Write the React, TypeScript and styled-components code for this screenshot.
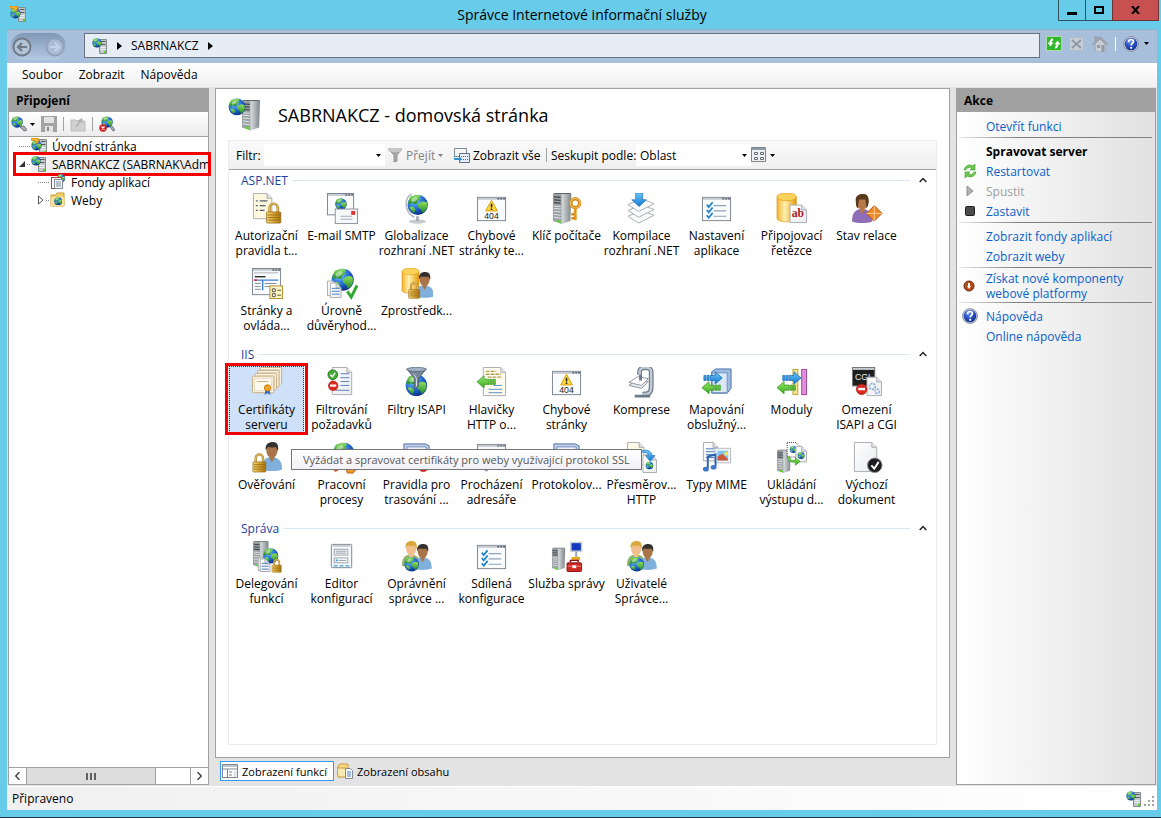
import React from "react";
import styled, { createGlobalStyle, css } from "styled-components";

const GlobalStyle = createGlobalStyle`
  * { box-sizing: border-box; }
  html, body { margin: 0; padding: 0; }
  body { font-family: "Open Sans", "Noto Sans", sans-serif; font-size: 12px; line-height: 15px; color: #000; }
  button, input, select { font: inherit; color: inherit; }
  button { background: none; border: 0; padding: 0; margin: 0; }
  svg { display: block; flex: none; }
  a { text-decoration: none; }
`;

/* ---------- drawing parts ---------- */

type At = { x?: number; y?: number; s?: number };
const at = (x = 0, y = 0, s = 1) => `translate(${x} ${y}) scale(${s})`;

const Defs = () => (
  <HiddenSvg width="0" height="0" aria-hidden="true">
    <defs>
      <radialGradient id="ocean" cx="35%" cy="28%" r="75%">
        <stop offset="0" stopColor="#b5e2ff" />
        <stop offset="0.35" stopColor="#3f8ce8" />
        <stop offset="0.75" stopColor="#1550b8" />
        <stop offset="1" stopColor="#0b2c7c" />
      </radialGradient>
      <linearGradient id="land" x1="0" y1="0" x2="0" y2="1">
        <stop offset="0" stopColor="#8fe05a" />
        <stop offset="1" stopColor="#1f8a2c" />
      </linearGradient>
      <linearGradient id="steel" x1="0" y1="0" x2="1" y2="0">
        <stop offset="0" stopColor="#d8dcde" />
        <stop offset="1" stopColor="#7d8488" />
      </linearGradient>
      <linearGradient id="gold" x1="0" y1="0" x2="1" y2="0">
        <stop offset="0" stopColor="#f6d878" />
        <stop offset="0.5" stopColor="#d9a536" />
        <stop offset="1" stopColor="#a87414" />
      </linearGradient>
      <linearGradient id="drum" x1="0" y1="0" x2="1" y2="0">
        <stop offset="0" stopColor="#f3b32a" />
        <stop offset="0.4" stopColor="#fff0b0" />
        <stop offset="1" stopColor="#e59a0c" />
      </linearGradient>
      <linearGradient id="paper" x1="0" y1="0" x2="1" y2="1">
        <stop offset="0" stopColor="#ffffff" />
        <stop offset="1" stopColor="#e9ebee" />
      </linearGradient>
      <linearGradient id="leaf" x1="0" y1="0" x2="0" y2="1">
        <stop offset="0" stopColor="#9cec6c" />
        <stop offset="1" stopColor="#35a81e" />
      </linearGradient>
      <linearGradient id="sky" x1="0" y1="0" x2="0" y2="1">
        <stop offset="0" stopColor="#6cc6f8" />
        <stop offset="1" stopColor="#1478d0" />
      </linearGradient>
      <radialGradient id="helpBall" cx="40%" cy="25%" r="80%">
        <stop offset="0" stopColor="#7d9df0" />
        <stop offset="0.5" stopColor="#2a52c4" />
        <stop offset="1" stopColor="#102f8c" />
      </radialGradient>
    </defs>
  </HiddenSvg>
);

const Globe = ({ x, y, s }: At) => (
  <g transform={at(x, y, s)}>
    <circle cx="16" cy="16" r="15" fill="url(#ocean)" />
    <path d="M9 3c4-2 9-2 12 0l-3 3 2 2-4 2-1 4-4 1-3-2-4 2-2-1c0-5 3-9 4-11z" fill="url(#land)" />
    <path d="M19 13l5-2 5 1c2 5 1 10-2 13l-4 3-2-5-4-3-1-4z" fill="url(#land)" />
    <path d="M4 19l5 0 4 4-2 5c-4-2-6-5-7-9z" fill="url(#land)" />
    <ellipse cx="11" cy="8" rx="5" ry="3" fill="#fff" opacity="0.45" transform="rotate(-30 11 8)" />
  </g>
);

const Server = ({ x, y, s }: At) => (
  <g transform={at(x, y, s)}>
    <path d="M9 1h10l-1 28-9 3z" fill="url(#steel)" />
    <path d="M0 1h9v31l-9-3z" fill="#9aa0a3" />
    <path d="M0 1h19l-1-1H2z" fill="#5e6467" />
    <path d="M1 4l7 .5M1 7l7 .5M1 10l7 .5" stroke="#3f4548" strokeWidth="1.3" />
    <path d="M1 13.500l7 .5M1 16l7 .5M1 19l7 .5M1 22l7 1M1 25l7 1" stroke="#e6eaec" strokeWidth="1" />
    <path d="M4 28l4 1v2l-4-1z" fill="#54e01c" />
  </g>
);

const SmallServer = ({ x, y, s }: At) => (
  <g transform={at(x, y, s)}>
    <path d="M.5.5h7v14h-7z" fill="#c3c8ca" stroke="#868c90" strokeWidth="1" />
    <path d="M2 2.500h4.500M2 5.500h4.500" stroke="#53585b" />
    <path d="M1.500 8.500h5M1.500 10.500h5" stroke="#eef1f2" />
    <path d="M5 12h2v2H5z" fill="#57d61e" />
  </g>
);

const Page = ({ x, y, s, w = 20, h = 26, fill = "url(#paper)" }: At & { w?: number; h?: number; fill?: string }) => (
  <g transform={at(x, y, s)}>
    <path d={`M.5.5h${w - 6}l5 5v${h - 6}h-${w - 1}z`} fill={fill} stroke="#a9adb3" />
    <path d={`M${w - 5.5}.5v5h5`} fill="#dfe2e6" stroke="#a9adb3" />
  </g>
);

const Lines = ({ x, y, w, n, gap = 3, c = "#4a7fc4" }: { x: number; y: number; w: number; n: number; gap?: number; c?: string }) => (
  <path d={Array.from({ length: n }, (_, i) => `M${x} ${y + i * gap}h${w}`).join("")} stroke={c} strokeWidth="1" />
);

const Frame = ({ x, y, w = 30, h = 25 }: { x: number; y: number; w?: number; h?: number }) => (
  <g transform={at(x, y)}>
    <rect x="0.5" y="0.5" width={w - 1} height={h - 1} fill="#fafbfc" stroke="#7c8490" />
    <path d={`M1 2h${w - 2}`} stroke="#c5cbd3" strokeWidth="2" />
    <path d={`M${w - 9} 2h2m1 0h2m1 0h2`} stroke="#5b6470" strokeWidth="1.5" />
  </g>
);

const Lock = ({ x, y, s }: At) => (
  <g transform={at(x, y, s)}>
    <path d="M4 11V6a4 4 0 0 1 8 0v5" fill="none" stroke="#b98a2c" strokeWidth="2.600" />
    <path d="M4 11V6a4 4 0 0 1 8 0v5" fill="none" stroke="#e9cd84" strokeWidth="0.9" />
    <rect x="1" y="10" width="14" height="11" rx="1" fill="url(#gold)" stroke="#8d6410" strokeWidth="0.7" />
    <path d="M2 13h12M2 15.500h12M2 18h12" stroke="#9a6c12" strokeWidth="0.9" />
  </g>
);

const Person = ({ x, y, s, hair = "#33302e", skin = "#a87448", shirt = "#7fb0dc" }: At & { hair?: string; skin?: string; shirt?: string }) => (
  <g transform={at(x, y, s)}>
    <path d="M1 27c0-8 3-11 7-12h5c5 1 8 4 8 12-5 2-15 2-20 0z" fill={shirt} />
    <path d="M8 15l3 5 3-5z" fill={skin} />
    <ellipse cx="11" cy="8.500" rx="5.500" ry="7" fill={skin} />
    <path d="M5 8C4 2 8 0 12 0s6 3 5 9l-2-4c-3 1-6 0-8 0z" fill={hair} />
  </g>
);

const Drum = ({ x, y, s }: At) => (
  <g transform={at(x, y, s)}>
    <path d="M0 4v22c0 5 20 5 20 0V4z" fill="url(#drum)" stroke="#d08c0a" strokeWidth="0.6" />
    <ellipse cx="10" cy="4" rx="10" ry="4" fill="#fbd35a" stroke="#e2a21c" strokeWidth="0.8" />
  </g>
);

const ArrowShape = ({ x, y, s, left, fill }: At & { left?: boolean; fill: string }) => (
  <g transform={at(x, y, s)}>
    <path
      d={left ? "M0 6L7 0v3.500h5v5H7V12zM13 3.500h2v5h-2zM16 3.500h2v5h-2z" : "M18 6L11 0v3.500H6v5h5V12zM5 3.500H3v5h2zM2 3.500H0v5h2z"}
      fill={fill}
      stroke={left ? "#2f9418" : "#1266b4"}
      strokeWidth="0.7"
    />
  </g>
);

const NoEntry = ({ x, y, s }: At) => (
  <g transform={at(x, y, s)}>
    <circle cx="6" cy="6" r="5.500" fill="#d9281e" stroke="#a31108" strokeWidth="0.6" />
    <rect x="2.500" y="4.500" width="7" height="2.500" fill="#fff" />
  </g>
);

const GlobeAndServer = () => (
  <>
    <SmallServer x={7} y={1} />
    <Globe x={0} y={0} s={0.31} />
  </>
);

const CheckList = () => (
  <>
    <Frame x={1} y={4} />
    <path d="M13 13h13M13 18.500h13M13 24h13" stroke="#8fa3bb" strokeWidth="1.200" />
    <path d="M6 12l2 2.500 4-5M6 17.500l2 2.500 4-5M6 23l2 2.500 4-5" fill="none" stroke="#1b83c4" strokeWidth="1.800" />
  </>
);

const Error404 = () => (
  <>
    <Frame x={1} y={4} />
    <path d="M16 7.500l6 11h-12z" fill="#ffd93a" stroke="#d99d0a" strokeLinejoin="round" />
    <path d="M16 11v4M16 16v1.500" stroke="#222" strokeWidth="1.600" />
    <text x="16" y="27" textAnchor="middle" fontSize="9" fontFamily="Liberation Sans, sans-serif" fill="#222">404</text>
  </>
);

const Community = () => (
  <>
    <Person x={0} y={0} s={0.95} hair="#d9a83c" skin="#f0c08c" shirt="#8fb368" />
    <Person x={12} y={3} s={0.94} />
    <Globe x={3} y={16} s={0.5} />
  </>
);

const Scroll = () => (
  <>
    <path d="M3 2h22l4 2v20H8L3 21z" fill="#c4d2ea" stroke="#4c67a3" />
    <path d="M6 5h20v18H6z" fill="#eff4fc" stroke="#6d87bb" />
    <Lines x={9} y={9} w={13} n={4} />
  </>
);

const art: Record<string, React.ReactNode> = {
  authRules: (
    <>
      <Page x={2} y={0} w={20} h={27} fill="#fdf8df" />
      <path d="M5 8h2m2 0h8M5 13h2m2 0h6M5 18h2m2 0h5" stroke="#56606c" strokeWidth="1.300" />
      <Lock x={15} y={9} s={1.05} />
    </>
  ),
  smtp: (
    <>
      <Frame x={1} y={0} w={28} h={23} />
      <Globe x={9} y={5} s={0.4} />
      <rect x="9.500" y="16.500" width="23" height="15" fill="#f6f7f9" stroke="#8d949e" />
      <rect x="26" y="18.500" width="4" height="4" fill="#e0322a" />
      <path d="M15 24h12M15 27h12" stroke="#a3aab3" />
    </>
  ),
  globalization: (
    <>
      <ellipse cx="17" cy="29.500" rx="9" ry="2.200" fill="#c6cbd0" />
      <path d="M17 24v5" stroke="#aab0b6" strokeWidth="3" />
      <path d="M11 1C3 5 3 20 14 25" fill="none" stroke="#b7bdc3" strokeWidth="1.800" />
      <Globe x={6} y={1} s={0.7} />
    </>
  ),
  error404: <Error404 />,
  machineKey: (
    <>
      <Server x={2} y={0} />
      <circle cx="25" cy="10.500" r="4.500" fill="none" stroke="#d48a1c" strokeWidth="3.500" />
      <circle cx="25" cy="10.500" r="5" fill="none" stroke="#fbcf6a" strokeWidth="1" />
      <path d="M25 15v13" stroke="#e09a24" strokeWidth="3" />
      <path d="M24 22h-3m3 4h-3" stroke="#d48a1c" strokeWidth="2.500" />
    </>
  ),
  compilation: (
    <>
      <path d="M2 24l14-6 13 5-16 8z" fill="#fafbfb" stroke="#a7adb4" />
      <path d="M2 18l14-6 13 5-16 8z" fill="#fafbfb" stroke="#a7adb4" />
      <path d="M2 12l14-6 13 5-16 8z" fill="#fff" stroke="#a7adb4" />
      <path d="M10 0h7v7h4l-7.500 7L6 7h4z" fill="url(#sky)" stroke="#1a6fb8" strokeWidth="0.7" />
    </>
  ),
  checklist: <CheckList />,
  connection: (
    <>
      <Drum x={1} y={0} />
      <Page x={14} y={12} w={18} h={19} />
      <text x="22.500" y="25" textAnchor="middle" fontSize="12" fontWeight="700" fontFamily="Liberation Serif, serif" fill="#b01818">ab</text>
    </>
  ),
  session: (
    <>
      <Person x={0} y={1} s={1.05} hair="#5a3a1c" skin="#b57848" shirt="#8f6cb8" />
      <path d="M5 9C4 3 8 1 12 1s7 3 6 9c0 3-1 4-2 6l-1-9C12 5 9 6 8 8l-1 8c-2-2-2-5-2-7z" fill="#5a3a1c" />
      <path d="M24 13l8 8-8 8-8-8z" fill="#f08a28" stroke="#c2530a" />
      <path d="M24 13v16M16 21h16" stroke="#fcd09a" />
    </>
  ),
  pages: (
    <>
      <Frame x={1} y={0} w={30} h={28} />
      <Lines x={3} y={5} w={25} n={1} c="#aab2bd" />
      <path d="M4 9h11" stroke="#333" strokeWidth="1.500" />
      <path d="M4 12.500h24M12 13v10" stroke="#3f7fd8" strokeWidth="1.500" />
      <path d="M3 12.500h3" stroke="#d82020" strokeWidth="1.500" />
      <Lines x={4} y={16} w={6} n={3} c="#828c98" />
      <Lines x={14} y={16} w={12} n={2} c="#828c98" />
      <rect x="19.500" y="18.500" width="13" height="13" fill="#fdf5c8" stroke="#b0902c" />
      <path d="M22 21.500h3v3h-3zM22 26.500h3v3h-3z" fill="#fff" stroke="#5a5238" />
      <path d="M27 23h4m-4 5h4" stroke="#5a5238" />
    </>
  ),
  trust: (
    <>
      <Globe x={5} y={0} s={0.76} />
      <Page x={1} y={13} w={12} h={16} />
      <Page x={4} y={15} w={12} h={16} />
      <Lines x={6} y={21} w={8} n={3} />
      <path d="M22 24l4 6 6-12" fill="none" stroke="#2fa82c" strokeWidth="3" />
    </>
  ),
  providers: (
    <>
      <Drum x={1} y={0} s={0.88} />
      <Person x={14} y={4} s={0.94} />
      <Lock x={7} y={14} s={0.82} />
    </>
  ),
  certificates: (
    <>
      {[9, 6, 3, 0].map((d) => (
        <g key={d} transform={at(1 + d * 0.9, 9 - d)}>
          <rect x="0.500" y="0.500" width="22" height="17" rx="1" fill="#fffaf0" stroke="#c5ab80" />
          <rect x="2.500" y="2.500" width="18" height="13" fill="none" stroke="#e3d3b4" />
        </g>
      ))}
      <path d="M6 15h12" stroke="#c5ab80" />
      <path d="M15 23l-1 6 3-2 3 2-1-6z" fill="#3a6fc2" />
      <circle cx="17" cy="21.500" r="3.200" fill="#f0a820" stroke="#c77c0a" />
    </>
  ),
  requestFilter: (
    <>
      <Page x={6} y={0} w={21} h={29} />
      <path d="M15 7h9M15 11h9M15 15h9M15 19h9M10 24h14" stroke="#5a7fb8" />
      <circle cx="7" cy="8" r="5" fill="#48a83a" stroke="#2b7d20" />
      <path d="M4.500 8l2 2 3-4" fill="none" stroke="#fff" strokeWidth="1.500" />
      <NoEntry x={2} y={14} s={0.9} />
    </>
  ),
  isapi: (
    <>
      <Globe x={4} y={7} s={0.74} />
      <path d="M6 2h20l-8 10v8l-4 3V12z" fill="#76899c" stroke="#48586a" strokeWidth="0.8" />
      <ellipse cx="16" cy="2.500" rx="10" ry="2.200" fill="#9fb1c2" stroke="#48586a" strokeWidth="0.7" />
      <path d="M13 7l3 5v8" stroke="#d5dfe8" fill="none" />
    </>
  ),
  headers: (
    <>
      <Page x={7} y={0} w={24} h={30} fill="#fdfaf0" />
      <path d="M10 4.500h11M10 7.500h16M12 10.500h14" stroke="#b6a24c" strokeWidth="1.400" strokeDasharray="4 1" />
      <path d="M18 19h9M13 23h14M13 26.500h14" stroke="#5a8fc4" />
      <ArrowShape x={1} y={9} s={1.05} left fill="url(#leaf)" />
    </>
  ),
  compression: (
    <>
      <path d="M14 8V5c0-6 12-6 12 0v15c0 8-4 8-9 8" fill="none" stroke="#6b7b8c" strokeWidth="5" />
      <path d="M14 8V5c0-6 12-6 12 0v15c0 8-4 8-9 8" fill="none" stroke="#c2ccd6" strokeWidth="2.500" />
      <path d="M3 19l9-6 11 2-7 7z" fill="#e9ecee" stroke="#8d959d" />
      <path d="M3 16l9-6 11 2-7 7z" fill="#fff" stroke="#8d959d" />
      <path d="M15 8v6M9 30h16" stroke="#6b7b8c" strokeWidth="3" />
    </>
  ),
  handlers: (
    <>
      <path d="M11 5l4-3h16v20l-4 5H11z" fill="#9ebbe0" stroke="#4d74aa" />
      <path d="M11.500 6H27v20.500H11.500z" fill="#dce8f6" stroke="#6d92c4" />
      <ArrowShape x={3} y={5} s={1.05} fill="url(#sky)" />
      <ArrowShape x={1} y={15} s={1.05} left fill="url(#leaf)" />
    </>
  ),
  modules: (
    <>
      <rect x="17.500" y="2.500" width="5" height="26" fill="#f6e58a" stroke="#b9a030" />
      <rect x="26.500" y="2.500" width="5" height="26" fill="#e28fdc" stroke="#a246a0" />
      <ArrowShape x={7} y={5} s={1.05} fill="url(#sky)" />
      <ArrowShape x={1} y={15} s={1.05} left fill="url(#leaf)" />
    </>
  ),
  cgi: (
    <>
      <rect x="1.500" y="0.500" width="23" height="19" fill="#1e1e1e" stroke="#777" />
      <path d="M2 2h22" stroke="#c8ccd0" strokeWidth="2" />
      <text x="4" y="13" fontSize="9" fontFamily="Liberation Sans, sans-serif" fill="#eee">CGI</text>
      <Page x={16} y={10} w={16} h={20} />
      <circle cx="22" cy="20" r="3" fill="none" stroke="#8fb0d4" strokeWidth="2" strokeDasharray="2 1" />
      <circle cx="27" cy="25" r="2.200" fill="none" stroke="#8fb0d4" strokeWidth="1.600" strokeDasharray="2 1" />
      <NoEntry x={5} y={17} />
    </>
  ),
  authentication: (
    <>
      <Person x={10} y={0} s={1.05} />
      <Lock x={1} y={11} s={0.95} />
    </>
  ),
  workers: (
    <>
      <Globe x={6} y={0} s={0.76} />
      <path d="M20 26l8-3 4 4-4 5h-6z" fill="#ef9a2a" stroke="#b9640a" />
      <path d="M4 26l6-2 4 4-4 3z" fill="#e0542a" />
    </>
  ),
  tracing: (
    <>
      <Scroll />
      <NoEntry x={17} y={19} />
    </>
  ),
  browsing: (
    <>
      <Frame x={1} y={2} />
      <circle cx="16" cy="19" r="6" fill="#dbe9f6" stroke="#8392a4" strokeWidth="2" />
      <path d="M13 25l-3 5" stroke="#8392a4" strokeWidth="3" />
    </>
  ),
  logging: <Scroll />,
  redirect: (
    <>
      <Page x={1} y={0} w={18} h={24} fill="#fdf9e6" />
      <Page x={17} y={13} w={15} h={19} />
      <Globe x={20} y={20} s={0.26} />
      <path d="M16 9c7-2 10 1 11 5h3l-5 6-5-6h3c-1-3-3-4-7-3z" fill="url(#sky)" stroke="#1a6fb8" strokeWidth="0.6" />
    </>
  ),
  mime: (
    <>
      <Page x={2} y={0} w={16} h={20} />
      <Lines x={5} y={7} w={9} n={4} />
      <rect x="14.500" y="6.500" width="16" height="15" fill="#f3f5f7" stroke="#b4bac2" />
      <rect x="17" y="9" width="11" height="10" fill="#7cc6f4" />
      <path d="M17 19v-4l5-3 6 6v1z" fill="#ce5a3c" />
      <circle cx="26" cy="12" r="2" fill="#fde54a" />
      <path d="M7 27V15l8-2v12" fill="none" stroke="#2d62b0" strokeWidth="2" />
      <ellipse cx="5" cy="28" rx="3" ry="2.400" fill="#3f78c8" />
      <ellipse cx="13" cy="26" rx="3" ry="2.400" fill="#3f78c8" />
    </>
  ),
  caching: (
    <>
      <Server x={1} y={8} s={0.75} />
      <path d="M11.500.5h9l4 4v11h-13z" fill="#fbfcfc" stroke="#444" strokeDasharray="1 1" />
      <Globe x={14} y={4} s={0.24} />
      <Page x={20} y={4} w={12} h={17} />
      <Globe x={22} y={10} s={0.24} />
      <path d="M14 15c0 4 3 4 6 4v-3l5 4-5 4v-3c-5 0-8-1-8-6z" fill="url(#leaf)" stroke="#2f9418" strokeWidth="0.6" />
    </>
  ),
  defaultDoc: (
    <>
      <Page x={3} y={0} w={24} h={31} />
      <circle cx="24.500" cy="24" r="7.500" fill="#1d1d1d" stroke="#8d8d8d" />
      <path d="M21 24l3 3.500 4.500-7" fill="none" stroke="#fff" strokeWidth="2" />
    </>
  ),
  delegation: (
    <>
      <Server x={2} y={0} s={0.85} />
      <Globe x={12} y={7} s={0.52} />
      <Page x={7} y={17} w={11} h={14} />
      <Page x={9} y={18} w={11} h={14} />
      <Lines x={11} y={23} w={7} n={3} />
      <Lock x={21} y={18} s={0.68} />
    </>
  ),
  editor: (
    <>
      <rect x="5.500" y="3.500" width="21" height="24" rx="1" fill="#f7f8fa" stroke="#7c8490" />
      <path d="M7 5h18" stroke="#c5cbd3" strokeWidth="2" />
      <rect x="8.500" y="8.500" width="14" height="6" fill="#fff" stroke="#9aa2ad" />
      <rect x="8.500" y="17.500" width="14" height="5" fill="#fff" stroke="#9aa2ad" />
      <path d="M10 10.500h11M10 12.500h11M13 20h8" stroke="#8d96a2" />
      <path d="M10 20h2" stroke="#2ba3d8" strokeWidth="2" />
      <path d="M8 25.500h4m2 0h4m2 0h4" stroke="#5ab4d8" strokeWidth="1.500" />
    </>
  ),
  community: <Community />,
  service: (
    <>
      <Server x={1} y={7} s={0.72} />
      <rect x="20.500" y="1.500" width="11" height="9" fill="#1638c0" stroke="#c6ccd2" strokeWidth="1.500" />
      <path d="M26 11v9" stroke="#9aa2aa" strokeWidth="2" />
      <path d="M21 18h9" stroke="#e8a820" strokeWidth="3" />
      <path d="M20 22v-2h8v2" fill="none" stroke="#8e1410" strokeWidth="1.500" />
      <rect x="16.500" y="22.500" width="15" height="9" rx="1" fill="#cf2a22" stroke="#8e1410" />
      <path d="M17 26h14" stroke="#f28a84" />
      <path d="M22 25h4v3h-4z" fill="#f3f3f3" />
    </>
  ),
};

const Art = ({ name }: { name: string }) => (
  <svg width="32" height="32" viewBox="0 0 33 33" aria-hidden="true">{art[name]}</svg>
);

const Svg16 = ({ children, size = 16 }: { children: React.ReactNode; size?: number }) => (
  <svg width={size} height={size} viewBox="0 0 16 16" aria-hidden="true">{children}</svg>
);

const ServerIcon = () => <Svg16><GlobeAndServer /></Svg16>;

const StartIcon = () => (
  <Svg16>
    <SmallServer x={8} y={1} />
    <Globe x={0} y={2} s={0.34} />
    <path d="M0 0h7l1 2-2 4-2-3-4-1z" fill="#f4b42c" stroke="#c27c0a" strokeWidth="0.7" />
  </Svg16>
);

const HelpIcon = () => (
  <Svg16>
    <circle cx="8" cy="8" r="7.500" fill="#c9ccd6" stroke="#85889a" strokeWidth="0.8" />
    <circle cx="8" cy="8" r="6.300" fill="url(#helpBall)" />
    <path d="M5.500 6.200c0-3.600 5-3.400 5-.6 0 1.800-2.300 1.900-2.300 3.800" fill="none" stroke="#fff" strokeWidth="1.700" />
    <circle cx="8.200" cy="11.800" r="1.100" fill="#fff" />
  </Svg16>
);

const Caret = ({ color = "#000" }: { color?: string }) => (
  <svg width="5" height="3" viewBox="0 0 5 3" aria-hidden="true"><path d="M0 0h5L2.500 3z" fill={color} /></svg>
);

const Triangle = () => (
  <svg width="5" height="8" viewBox="0 0 5 8" aria-hidden="true"><path d="M0 0l5 4-5 4z" fill="#000" /></svg>
);

/* ---------- layout ---------- */

const HiddenSvg = styled.svg`
  position: absolute;
`;

const Window = styled.div`
  display: flex;
  flex-direction: column;
  min-height: 100vh;
  padding: 0 4px 7px 7px;
  background: #67cbea;
  border-bottom: 1px solid #2b3a44;
`;

const TitleBar = styled.header`
  display: grid;
  grid-template-columns: 100px 1fr 100px;
  align-items: start;
  height: 29px;
`;

const TitleIcon = styled.span`
  padding: 6px 0 0 3px;
`;

const Title = styled.h1`
  margin: 0;
  font-size: 14px;
  font-weight: 400;
  line-height: 30px;
  text-align: center;
  white-space: nowrap;
`;

const Captions = styled.div`
  display: flex;
  justify-content: flex-end;
  margin-right: -2px;
`;

const CaptionButton = styled.button<{ $close?: boolean }>`
  display: flex;
  align-items: center;
  justify-content: center;
  width: ${(p) => (p.$close ? 47 : 28)}px;
  height: 21px;
  margin-left: -1px;
  border: 1px solid ${(p) => (p.$close ? "#6e3232" : "#33505c")};
  border-top: 0;
  background: ${(p) => (p.$close ? "#c75050" : "transparent")};
`;

const AddressBar = styled.div`
  display: flex;
  align-items: center;
  height: 34px;
  padding: 0 8px 0 4px;
  background: #a8bfdc;
  border-top: 1px solid #8db0cc;
`;

const NavPair = styled.div`
  display: flex;
  align-items: center;
  justify-content: space-between;
  width: 55px;
  height: 27px;
  padding: 0 1px;
  margin-right: 18px;
  border-radius: 13px;
  background: linear-gradient(#8098b6, #b4c9e2);
`;

const Crumbs = styled.nav`
  display: flex;
  align-items: center;
  flex: 1;
  gap: 9px;
  height: 25px;
  padding: 0 7px;
  margin: 0 6px 2px 0;
  border: 1px solid #6a737c;
  background: #e7edf5;
`;

const AddressTools = styled.div`
  display: flex;
  align-items: center;
  gap: 7px;
  margin-bottom: 6px;
`;

const ToolSeparator = styled.span<{ $color?: string }>`
  width: 1px;
  height: 14px;
  background: ${(p) => p.$color ?? "#a0a0a0"};
`;

const ToolButton = styled.button<{ $gap?: number }>`
  display: flex;
  align-items: center;
  gap: ${(p) => p.$gap ?? 3}px;
  white-space: nowrap;
  &:disabled { color: #838383; }
`;

const MenuBar = styled.nav`
  display: flex;
  align-items: center;
  gap: 16px;
  height: 24px;
  padding: 0 15px 2px;
  background: linear-gradient(#fff, #f0f0f0);
`;

const Body = styled.div`
  display: flex;
  flex: 1;
  gap: 6px;
  padding: 1px;
  background: #e3e3e3;
`;

const panel = css`
  display: flex;
  flex-direction: column;
  border: 1px solid #a0a0a0;
`;

const Connections = styled.section`
  ${panel}
  width: 201px;
  flex: none;
  background: #fff;
`;

const PanelTitle = styled.h2`
  margin: 0;
  padding: 0 7px;
  font-size: 12px;
  font-weight: 700;
  line-height: 23px;
  background: #a0a0a0;
`;

const ConnectionTools = styled.div`
  display: flex;
  align-items: center;
  gap: 6px;
  height: 25px;
  padding: 0 2px;
  border-bottom: 1px solid #a0a0a0;
  background: linear-gradient(#fff, #ececec);
`;

const Tree = styled.ul`
  flex: 1;
  margin: 0;
  padding: 0;
  list-style: none;
`;

const TreeRow = styled.li<{ $depth: number }>`
  position: relative;
  display: flex;
  align-items: center;
  height: 18px;
  padding-left: ${(p) => 10 + p.$depth * 19}px;
`;

const Branch = styled.span<{ $leaf?: boolean }>`
  display: flex;
  align-items: center;
  gap: 2px;
  width: 12px;
  height: 18px;
  &::after {
    content: "";
    flex: 1;
    height: 1px;
    margin-right: 1px;
    background: repeating-linear-gradient(to right, #909090 0 1px, transparent 1px 2px);
  }
`;

const TreeLink = styled.a<{ $active?: boolean }>`
  display: flex;
  align-items: center;
  flex: 1;
  gap: 5px;
  min-width: 0;
  height: 18px;
  overflow: hidden;
  color: #000;
  white-space: nowrap;
  background: ${(p) => (p.$active ? "#f0f0f0" : "transparent")};
`;

const Callout = styled.span<{ $inset: string }>`
  position: absolute;
  inset: ${(p) => p.$inset};
  border: 3px solid #f00000;
  pointer-events: none;
`;

const ScrollBar = styled.div`
  display: grid;
  grid-template-columns: 17px 130px 1fr 17px;
  height: 17px;
  border-top: 1px solid #a0a0a0;
`;

const ScrollPart = styled.button`
  display: flex;
  align-items: center;
  justify-content: center;
`;

const ScrollThumb = styled.div`
  display: flex;
  align-items: center;
  justify-content: center;
  gap: 2px;
  border: solid #a0a0a0;
  border-width: 0 1px;
  background: #dcdcdc;
  i { width: 2px; height: 7px; background: #606060; }
`;

const ScrollTrack = styled.div`
  border-right: 1px solid #a0a0a0;
`;

const Center = styled.main`
  display: flex;
  flex-direction: column;
  flex: 1;
  min-width: 0;
`;

const Sheet = styled.div`
  ${panel}
  flex: 1;
  padding: 0 12px 12px;
  background: #fff;
`;

const PageHead = styled.div`
  display: flex;
  align-items: center;
  gap: 17px;
  height: 51px;
  h2 { margin: 0; font-size: 18px; font-weight: 400; line-height: 24px; }
`;

const Features = styled.div`
  flex: 1;
  border: 1px solid #ececec;
`;

const FilterBar = styled.form`
  display: flex;
  align-items: center;
  height: 29px;
  padding-left: 7px;
  border-bottom: 1px solid #a0a0a0;
  background: linear-gradient(#fafafa, #efefef);
  white-space: nowrap;
`;

const Slot = styled.div<{ $w: number }>`
  display: flex;
  align-items: center;
  gap: 3px;
  width: ${(p) => p.$w}px;
`;

const Combo = styled.div<{ $w: number }>`
  display: grid;
  align-items: center;
  width: ${(p) => p.$w}px;
  height: 22px;
  background: #fff;
  > * { grid-area: 1 / 1; }
  > svg { justify-self: end; margin-right: 4px; pointer-events: none; }
  input, select {
    width: 100%;
    height: 22px;
    padding: 0 4px;
    border: 0;
    outline: 0;
    appearance: none;
    background: transparent;
  }
`;

const Group = styled.section`
  padding: 0 0 4px;
`;

const GroupHead = styled.div`
  display: flex;
  align-items: center;
  gap: 4px;
  height: 20px;
  padding: 0 9px 0 12px;
  h3 { margin: 0; font-size: 12px; font-weight: 400; line-height: 15px; color: #1e3f9e; }
  hr { flex: 1; margin: 0 5px 0 0; border: 0; border-top: 1px solid #dbe6f4; }
`;

const Grid = styled.div`
  display: grid;
  grid-template-columns: repeat(auto-fill, 75px);
`;

const Cell = styled.div`
  position: relative;
  height: 75px;
`;

const Item = styled.button<{ $selected?: boolean }>`
  display: flex;
  flex-direction: column;
  align-items: center;
  width: 75px;
  height: ${(p) => (p.$selected ? "69px" : "75px")};
  padding-top: ${(p) => (p.$selected ? 1 : 3)}px;
  margin-top: ${(p) => (p.$selected ? 2 : 0)}px;
  background: ${(p) => (p.$selected ? "#cfe1f8" : "transparent")};
  outline: ${(p) => (p.$selected ? "1px dotted #333" : "0")};
  outline-offset: -1px;
  white-space: nowrap;
  span { display: block; line-height: 15px; }
  svg { margin-bottom: 3px; }
`;

const Tooltip = styled.div`
  position: absolute;
  z-index: 2;
  top: 85px;
  left: 62px;
  padding: 2px 11px;
  border: 1px solid #767676;
  background: linear-gradient(#fff, #f1f1f7);
  color: #575757;
  font-size: 11px;
  white-space: nowrap;
`;

const ViewTabs = styled.div`
  display: flex;
  gap: 1px;
  height: 27px;
  padding: 3px 5px 4px;
`;

const ViewTab = styled.button<{ $active?: boolean }>`
  display: flex;
  align-items: center;
  gap: 4px;
  padding: 0 6px 0 1px;
  border: 1px solid ${(p) => (p.$active ? "#3399ff" : "transparent")};
  background: ${(p) => (p.$active ? "#fff" : "transparent")};
  font-size: 11px;
`;

const Actions = styled.aside`
  ${panel}
  width: 200px;
  flex: none;
  background: linear-gradient(to right, #fff, #e1e1e1);
`;

const ActionList = styled.div`
  padding: 4px 3px 4px 2px;
  hr {
    height: 1px;
    margin: 1px 0 3px;
    border: 0;
    background: linear-gradient(to right, #e8e8e8, #808080 30%);
  }
`;

const ActionRow = styled.div<{ $tall?: boolean }>`
  display: grid;
  grid-template-columns: 21px 1fr;
  align-items: center;
  gap: 6px;
  min-height: ${(p) => (p.$tall ? 30 : 20)}px;
  > span:first-child { display: flex; justify-content: center; }
  a { color: #0a5fcc; }
  a[aria-disabled="true"] { color: #a0a0a0; }
`;

const StatusBar = styled.footer`
  display: flex;
  align-items: center;
  justify-content: space-between;
  height: 24px;
  padding: 0 3px 0 5px;
  border-top: 1px solid #fff;
  background: linear-gradient(to right, #f0f0f0, #fff);
`;

const StatusIcons = styled.div`
  display: flex;
  gap: 2px;
`;

/* ---------- content ---------- */

type Feature = { lines: string[]; icon: string; selected?: boolean };
const f = (icon: string, ...lines: string[]): Feature => ({ icon, lines });

const groups: { name: string; items: Feature[] }[] = [
  {
    name: "ASP.NET",
    items: [
      f("authRules", "Autorizační", "pravidla t..."),
      f("smtp", "E-mail SMTP"),
      f("globalization", "Globalizace", "rozhraní .NET"),
      f("error404", "Chybové", "stránky te..."),
      f("machineKey", "Klíč počítače"),
      f("compilation", "Kompilace", "rozhraní .NET"),
      f("checklist", "Nastavení", "aplikace"),
      f("connection", "Připojovací", "řetězce"),
      f("session", "Stav relace"),
      f("pages", "Stránky a", "ovláda..."),
      f("trust", "Úrovně", "důvěryhod..."),
      f("providers", "Zprostředk..."),
    ],
  },
  {
    name: "IIS",
    items: [
      { ...f("certificates", "Certifikáty", "serveru"), selected: true },
      f("requestFilter", "Filtrování", "požadavků"),
      f("isapi", "Filtry ISAPI"),
      f("headers", "Hlavičky", "HTTP o..."),
      f("error404", "Chybové", "stránky"),
      f("compression", "Komprese"),
      f("handlers", "Mapování", "obslužný..."),
      f("modules", "Moduly"),
      f("cgi", "Omezení", "ISAPI a CGI"),
      f("authentication", "Ověřování"),
      f("workers", "Pracovní", "procesy"),
      f("tracing", "Pravidla pro", "trasování ..."),
      f("browsing", "Procházení", "adresáře"),
      f("logging", "Protokolov..."),
      f("redirect", "Přesměrov...", "HTTP"),
      f("mime", "Typy MIME"),
      f("caching", "Ukládání", "výstupu d..."),
      f("defaultDoc", "Výchozí", "dokument"),
    ],
  },
  {
    name: "Správa",
    items: [
      f("delegation", "Delegování", "funkcí"),
      f("editor", "Editor", "konfigurací"),
      f("community", "Oprávnění", "správce ..."),
      f("checklist", "Sdílená", "konfigurace"),
      f("service", "Služba správy"),
      f("community", "Uživatelé", "Správce..."),
    ],
  },
];

const Action = ({ icon, children, disabled, tall }: { icon?: React.ReactNode; children: React.ReactNode; disabled?: boolean; tall?: boolean }) => (
  <ActionRow $tall={tall}>
    <span>{icon}</span>
    <a href="#" aria-disabled={disabled}>{children}</a>
  </ActionRow>
);

const NavCircle = ({ back }: { back?: boolean }) => (
  <svg width="20" height="20" viewBox="0 0 20 20" aria-hidden="true">
    <circle cx="10" cy="10" r="8.500" fill={back ? "#b3c3d8" : "#a9bdd6"} stroke={back ? "#6f7884" : "#91a2b8"} strokeWidth="1.800" />
    <path d={back ? "M15 10H6m4-4l-4 4 4 4" : "M5 10h9m-4-4l4 4-4 4"} fill="none" stroke={back ? "#6f7884" : "#c4d3e6"} strokeWidth="2.200" />
  </svg>
);

export default function App() {
  return (
    <Window>
      <GlobalStyle />
      <Defs />
      <TitleBar>
        <TitleIcon><StartIcon /></TitleIcon>
        <Title>Správce Internetové informační služby</Title>
        <Captions>
          <CaptionButton aria-label="Minimalizovat">
            <svg width="10" height="9" viewBox="0 0 10 9"><path d="M0 6h10v3H0z" /></svg>
          </CaptionButton>
          <CaptionButton aria-label="Maximalizovat">
            <svg width="10" height="8" viewBox="0 0 10 8"><path d="M1 1h8v6H1z" fill="none" stroke="#000" strokeWidth="2" /></svg>
          </CaptionButton>
          <CaptionButton $close aria-label="Zavřít">
            <svg width="9" height="8" viewBox="0 0 9 8"><path d="M1 0l7 8M8 0L1 8" stroke="#000" strokeWidth="2" /></svg>
          </CaptionButton>
        </Captions>
      </TitleBar>

      <AddressBar>
        <NavPair>
          <button aria-label="Zpět"><NavCircle back /></button>
          <button aria-label="Vpřed"><NavCircle /></button>
        </NavPair>
        <Crumbs aria-label="Umístění">
          <ServerIcon />
          <Triangle />
          <span>SABRNAKCZ</span>
          <Triangle />
        </Crumbs>
        <AddressTools>
          <ToolButton aria-label="Obnovit">
            <Svg16>
              <rect x="0.500" y="0.500" width="15" height="14" fill="#2eb82a" stroke="#a9dca6" />
              <path d="M7 3.500c-2 0-2.500 1-2.500 4M9 11.500c2 0 2.500-1 2.500-4" fill="none" stroke="#fff" strokeWidth="2" />
              <path d="M1.500 6.500h6l-3 4zM8.500 8.500h6l-3-4z" fill="#fff" />
            </Svg16>
          </ToolButton>
          <ToolButton aria-label="Zastavit" disabled>
            <Svg16>
              <rect x="0.500" y="1.500" width="14" height="13" fill="#c6ced8" stroke="#b1bac5" />
              <path d="M3 4l9 8M12 4l-9 8" stroke="#8e98a4" strokeWidth="1.800" />
            </Svg16>
          </ToolButton>
          <ToolButton aria-label="Domů" disabled>
            <Svg16>
              <path d="M3 8l5-5 5 5v8H3z" fill="#c9ced5" stroke="#98a1ac" />
              <path d="M0 9l8-8 8 8M3 5V1h2v2" fill="none" stroke="#98a1ac" strokeWidth="1.500" />
              <path d="M5 9h3v3H5zM9.500 9h2.500v7H9.500z" fill="#929ba7" />
            </Svg16>
          </ToolButton>
          <ToolSeparator $color="#fff" />
          <ToolButton aria-label="Nápověda" $gap={5}><HelpIcon /><Caret /></ToolButton>
        </AddressTools>
      </AddressBar>

      <MenuBar>
        <button>Soubor</button>
        <button>Zobrazit</button>
        <button>Nápověda</button>
      </MenuBar>

      <Body>
        <Connections>
          <PanelTitle>Připojení</PanelTitle>
          <ConnectionTools>
            <ToolButton aria-label="Připojit">
              <Svg16>
                <Globe x={0} y={0} s={0.38} />
                <path d="M9 11l4 4 3-1-3-4z" fill="#a9b3bd" stroke="#6f7983" />
              </Svg16>
              <Caret />
            </ToolButton>
            <ToolButton aria-label="Uložit" disabled>
              <Svg16>
                <path d="M0 0h16v16H0z" fill="#a3a3a3" />
                <path d="M3 1h10v6H3zM4 10h8v6H4z" fill="#e4e4e4" />
                <path d="M6 11h2v4H6z" fill="#8b8b8b" />
              </Svg16>
            </ToolButton>
            <ToolSeparator />
            <ToolButton aria-label="Nahoru" disabled>
              <Svg16>
                <path d="M1 4h5l1 1h8v10H1z" fill="#d0d0d0" stroke="#bdbdbd" />
                <path d="M5 11l4-5-2-1 5-3 1 5-2-1-4 5z" fill="#b0b0b0" />
              </Svg16>
            </ToolButton>
            <ToolSeparator />
            <ToolButton aria-label="Odpojit">
              <Svg16>
                <Globe x={2} y={0} s={0.38} />
                <path d="M11 11l3 4 2-1-3-4z" fill="#a9b3bd" stroke="#6f7983" />
                <circle cx="4" cy="12" r="3.800" fill="#d02020" />
                <path d="M2.500 10.500l3 3m0-3l-3 3" stroke="#fff" strokeWidth="1.200" />
              </Svg16>
            </ToolButton>
          </ConnectionTools>

          <Tree>
            <TreeRow $depth={0}>
              <Branch />
              <TreeLink href="#"><StartIcon />Úvodní stránka</TreeLink>
            </TreeRow>
            <TreeRow $depth={0}>
              <Branch>
                <svg width="6" height="6" viewBox="0 0 6 6"><path d="M6 0v6H0z" fill="#333" /></svg>
              </Branch>
              <TreeLink href="#" $active><ServerIcon />SABRNAKCZ (SABRNAK\Adm</TreeLink>
              <Callout $inset="-3px -3px -3px 4px" />
            </TreeRow>
            <TreeRow $depth={1}>
              <Branch />
              <TreeLink href="#">
                <Svg16>
                  <Globe x={7} y={0} s={0.26} />
                  <rect x="1.500" y="3.500" width="10" height="11" fill="#fff" stroke="#b8403c" />
                  <rect x="4.500" y="5.500" width="8" height="9" fill="#f4f6f8" stroke="#808a94" />
                  <Lines x={6} y={8} w={5} n={3} gap={2} c="#7c8896" />
                </Svg16>
                Fondy aplikací
              </TreeLink>
            </TreeRow>
            <TreeRow $depth={1}>
              <Branch>
                <svg width="6" height="10" viewBox="0 0 6 10"><path d="M.5 1l4.500 4-4.500 4z" fill="#fff" stroke="#555" /></svg>
              </Branch>
              <TreeLink href="#">
                <Svg16>
                  <path d="M1 3h5l1-2h7v13H1z" fill="#f3cf6a" stroke="#c99b2c" />
                  <path d="M1 5h13v9H1z" fill="#f9e09a" />
                  <Globe x={4} y={5} s={0.26} />
                </Svg16>
                Weby
              </TreeLink>
            </TreeRow>
          </Tree>

          <ScrollBar>
            <ScrollPart aria-label="Posunout vlevo">
              <svg width="5" height="8" viewBox="0 0 5 8"><path d="M4.500 0L.8 4l3.700 4" fill="none" stroke="#444" strokeWidth="1.400" /></svg>
            </ScrollPart>
            <ScrollThumb><i /><i /><i /></ScrollThumb>
            <ScrollTrack />
            <ScrollPart aria-label="Posunout vpravo">
              <svg width="5" height="8" viewBox="0 0 5 8"><path d="M.5 0l3.700 4L.5 8" fill="none" stroke="#444" strokeWidth="1.400" /></svg>
            </ScrollPart>
          </ScrollBar>
        </Connections>

        <Center>
          <Sheet>
            <PageHead>
              <svg width="33" height="33" viewBox="0 0 33 33" aria-hidden="true">
                <Server x={14} y={2} s={0.95} />
                <Globe x={0} y={0} s={0.56} />
              </svg>
              <h2>SABRNAKCZ - domovská stránka</h2>
            </PageHead>
            <Features>
              <FilterBar>
                <Slot $w={28}><label htmlFor="filter">Filtr:</label></Slot>
                <Combo $w={121}><input id="filter" /><Caret /></Combo>
                <Slot $w={69}>
                  <ToolButton type="button" disabled>
                    <svg width="18" height="16" viewBox="0 0 18 16"><path d="M3 2h14l-5 6v6l-3 1V8z" fill="#a8a8a8" stroke="#949494" /><ellipse cx="10" cy="3" rx="7" ry="2" fill="#c8c8c8" /></svg>
                    Přejít
                  </ToolButton>
                  <ToolButton type="button" disabled aria-label="Možnosti přechodu"><Caret color="#838383" /></ToolButton>
                </Slot>
                <Slot $w={92}>
                  <Svg16>
                    <path d="M.5 1.500h12v8H.5z" fill="#f4f6f8" stroke="#7c8894" />
                    <path d="M5.500 6.500h10v9h-10z" fill="#e9eef6" stroke="#5d6d8a" />
                    <path d="M7 9.500h7M7 12.500h7" stroke="#4a62a8" strokeDasharray="1 1" />
                    <path d="M1 8v3h4v-2l3 3-3 3v-2H0z" fill="#2b8fd0" />
                  </Svg16>
                  <ToolButton type="button">Zobrazit vše</ToolButton>
                </Slot>
                <Slot $w={5}><ToolSeparator /></Slot>
                <Slot $w={85}><label htmlFor="groupBy">Seskupit podle:</label></Slot>
                <Combo $w={115}>
                  <select id="groupBy" defaultValue="Oblast"><option>Oblast</option></select>
                  <Caret />
                </Combo>
                <Slot $w={28}>
                  <ToolButton type="button" aria-label="Zobrazení">
                    <Svg16>
                      <path d="M.5.5h14v14H.5z" fill="#eef0f2" stroke="#7d858d" />
                      <path d="M1 2h14" stroke="#8d98a6" strokeWidth="2" />
                      <path d="M3.500 5.500h3v2h-3zM9.500 5.500h3v2h-3zM3.500 10.500h3v2h-3zM9.500 10.500h3v2h-3z" fill="#fff" stroke="#666e78" />
                    </Svg16>
                    <Caret />
                  </ToolButton>
                </Slot>
              </FilterBar>
              {groups.map((g) => (
                <Group key={g.name}>
                  <GroupHead>
                    <h3>{g.name}</h3>
                    <hr />
                    <button aria-label={`Sbalit ${g.name}`}>
                      <svg width="8" height="6" viewBox="0 0 8 6"><path d="M.7 5L4 1.500 7.300 5" fill="none" stroke="#222" strokeWidth="1.500" /></svg>
                    </button>
                  </GroupHead>
                  <Grid>
                    {g.items.map((it) => (
                      <Cell key={it.icon + it.lines.join()}>
                        <Item $selected={it.selected}>
                          <Art name={it.icon} />
                          {it.lines.map((l) => <span key={l}>{l}</span>)}
                        </Item>
                        {it.selected && (
                          <>
                            <Callout $inset="-1px -4px 4px -4px" />
                            <Tooltip role="tooltip">Vyžádat a spravovat certifikáty pro weby využívající protokol SSL</Tooltip>
                          </>
                        )}
                      </Cell>
                    ))}
                  </Grid>
                </Group>
              ))}
            </Features>
          </Sheet>
          <ViewTabs>
            <ViewTab $active>
              <Svg16>
                <path d="M.5 1.500h15v13H.5z" fill="#fff" stroke="#7c8490" />
                <path d="M1 3h14M1 6h14" stroke="#aab2bc" strokeWidth="1.500" />
                <path d="M5.500 6v8M7 9h3m-3 3h3" stroke="#7c8490" />
                <path d="M11.500 8h3v6h-3z" fill="#dfe4ea" />
              </Svg16>
              Zobrazení funkcí
            </ViewTab>
            <ViewTab>
              <Svg16>
                <path d="M1 3l2-2h8v11H1z" fill="#f6d684" stroke="#c69a38" />
                <path d="M0 5h9l2 9H1z" fill="#fbe9b4" stroke="#c69a38" />
                <path d="M8.500 5.500h5l2 2v8h-7z" fill="#fff" stroke="#848c96" />
                <Lines x={10} y={9} w={4} n={3} gap={2} />
              </Svg16>
              Zobrazení obsahu
            </ViewTab>
          </ViewTabs>
        </Center>

        <Actions>
          <PanelTitle>Akce</PanelTitle>
          <ActionList>
            <Action>Otevřít funkci</Action>
            <hr />
            <ActionRow><span /><strong>Spravovat server</strong></ActionRow>
            <Action
              icon={
                <Svg16>
                  <path d="M2 7c1-5 6-6 9-4l2-2v6H8l2-2C7 4 4 5 4 7z" fill="#6cc850" stroke="#3a9a28" strokeWidth="0.600" />
                  <path d="M14 9c-1 5-6 6-9 4l-2 2V9h5l-2 2c3 1 6 0 6-2z" fill="#6cc850" stroke="#3a9a28" strokeWidth="0.600" />
                </Svg16>
              }
            >
              Restartovat
            </Action>
            <Action disabled icon={<Svg16><path d="M5 3l6 5-6 5z" fill="#b4b4b4" stroke="#8f8f8f" /></Svg16>}>Spustit</Action>
            <Action icon={<Svg16><rect x="3.500" y="3.500" width="9" height="9" rx="1" fill="#4a4a4a" stroke="#222" /></Svg16>}>Zastavit</Action>
            <hr />
            <Action>Zobrazit fondy aplikací</Action>
            <Action>Zobrazit weby</Action>
            <hr />
            <Action
              tall
              icon={
                <Svg16>
                  <circle cx="7" cy="8" r="5" fill="#b84a18" stroke="#6e2a10" />
                  <path d="M6 5h2v3h1l-2 3-2-3h1z" fill="#fff" />
                </Svg16>
              }
            >
              Získat nové komponenty<br />webové platformy
            </Action>
            <hr />
            <Action icon={<HelpIcon />}>Nápověda</Action>
            <Action>Online nápověda</Action>
          </ActionList>
        </Actions>
      </Body>

      <StatusBar>
        <span>Připraveno</span>
        <StatusIcons>
          <ServerIcon />
          <svg width="10" height="16" viewBox="0 0 10 16">
            <path d="M8 5h2v2H8zM4 9h2v2H4zM8 9h2v2H8zM0 13h2v2H0zM4 13h2v2H4zM8 13h2v2H8z" fill="#a0a0a0" />
          </svg>
        </StatusIcons>
      </StatusBar>
    </Window>
  );
}
